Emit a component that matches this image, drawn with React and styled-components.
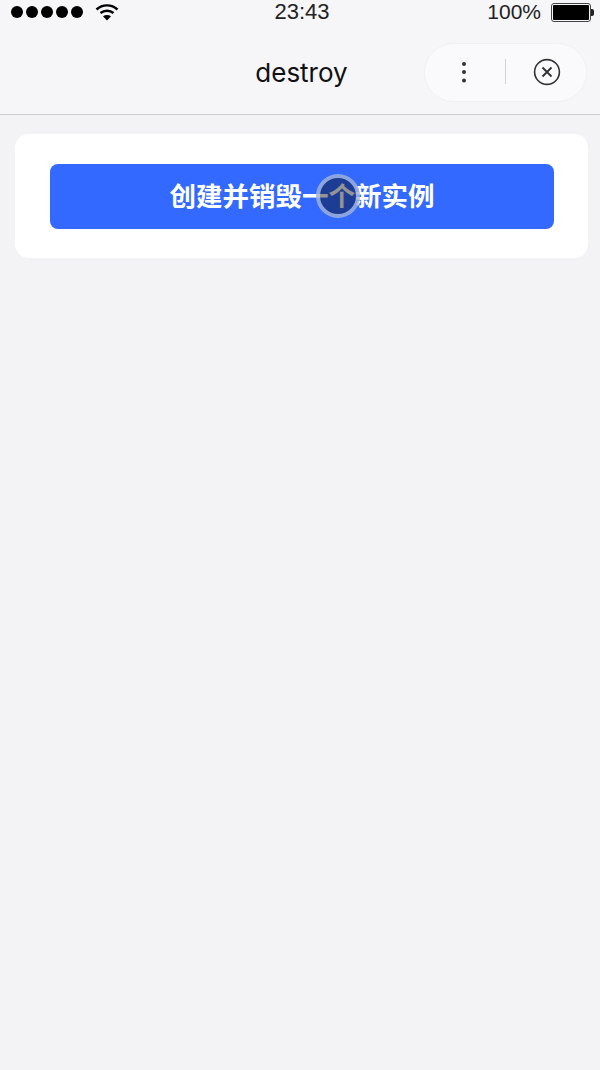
import React from "react";
import styled, { createGlobalStyle } from "styled-components";

const GlobalStyle = createGlobalStyle`
  html, body {
    margin: 0;
    padding: 0;
    background: #f3f2f5;
  }
  * {
    box-sizing: border-box;
  }
`;

const Page = styled.div`
  width: 600px;
  height: 1070px;
  overflow: hidden;
  display: flex;
  flex-direction: column;
  background: #f3f2f5;
  font-family: "Inter", "Liberation Sans", "Noto Sans CJK SC", sans-serif;
  color: #111;
`;

const Header = styled.header`
  height: 115px;
  flex: none;
  background: #f6f5f8;
  border-bottom: 1px solid #cfcfd1;
  display: flex;
  flex-direction: column;
`;

const StatusBar = styled.div`
  height: 24px;
  padding: 0 9px 0 11px;
  display: grid;
  grid-template-columns: 1fr auto 1fr;
  align-items: center;
`;

const StatusLeft = styled.div`
  display: flex;
  align-items: center;
  gap: 12px;
`;

const Dots = styled.div`
  display: flex;
  gap: 3px;
`;

const Dot = styled.span`
  width: 12px;
  height: 12px;
  border-radius: 50%;
  background: #000;
`;

const Clock = styled.div`
  font-family: "Liberation Sans", sans-serif;
  font-size: 22px;
  line-height: 24px;
  color: #222;
  margin-left: 2px;
`;

const StatusRight = styled.div`
  display: flex;
  justify-content: flex-end;
  align-items: center;
  gap: 10px;
  font-family: "Liberation Sans", sans-serif;
  font-size: 21px;
  line-height: 24px;
  color: #222;
`;

const Battery = styled.div`
  position: relative;
  width: 40px;
  height: 19px;
  padding: 1px;
  border: 1px solid #444;
  border-radius: 3px;

  &::before {
    content: "";
    display: block;
    height: 100%;
    background: #000;
    border-radius: 1px;
  }

  &::after {
    content: "";
    position: absolute;
    right: -4px;
    top: 5px;
    width: 3px;
    height: 7px;
    background: #222;
    border-radius: 0 2px 2px 0;
  }
`;

const NavBar = styled.div`
  flex: 1;
  position: relative;
  display: flex;
  align-items: center;
  justify-content: center;
  padding: 8px 0 0 3px;
`;

const Title = styled.h1`
  margin: 0;
  font-size: 26px;
  font-weight: 400;
  line-height: 32px;
  color: #111;
`;

const Capsule = styled.div`
  position: absolute;
  top: 19px;
  right: 13px;
  width: 163px;
  height: 59px;
  border-radius: 30px;
  background: #faf9fc;
  border: 1px solid #f1f0f3;
  display: grid;
  grid-template-columns: 1fr 1px 1fr;
  align-items: center;
  justify-items: center;
  padding-bottom: 2px;
`;

const Divider = styled.span`
  width: 1px;
  height: 25px;
  background: #d2d2d4;
`;

const IconButton = styled.span`
  display: flex;
  align-items: center;
  justify-content: center;
`;

const MoreButton = styled(IconButton)`
  margin-right: 2px;
`;

const CloseButton = styled(IconButton)`
  margin-left: 2px;
`;

const Content = styled.main`
  padding: 19px 12px 0 15px;
`;

const Card = styled.section`
  height: 124px;
  padding: 30px 34px 0 35px;
  background: #fff;
  border-radius: 14px;
`;

const CreateButton = styled.button`
  position: relative;
  display: block;
  width: 100%;
  height: 65px;
  padding: 0 0 3px;
  border: none;
  border-radius: 8px;
  background: #3369ff;
  color: #fff;
  font-family: "Noto Sans CJK SC", sans-serif;
  font-size: 26.5px;
  font-weight: 700;
  line-height: 40px;
  text-align: center;
`;

const TouchMarker = styled.span`
  position: absolute;
  left: 266px;
  top: 10px;
  width: 44px;
  height: 44px;
  border-radius: 50%;
  background: rgba(0, 0, 0, 0.42);
  border: 4px solid rgba(190, 210, 255, 0.7);
`;

const StatusWifi = () => (
  <svg width="24" height="18" viewBox="0 0 24 18" fill="none">
    <path d="M1.5 6.5C7.5 1 16.5 1 22.5 6.5" stroke="#000" strokeWidth="2.4" />
    <path d="M5.5 10C9.2 7 14.8 7 18.5 10" stroke="#000" strokeWidth="2.4" />
    <path d="M12 17.5L8 13.2C10.4 11.6 13.6 11.6 16 13.2Z" fill="#000" />
  </svg>
);

const MoreIcon = () => (
  <svg width="8" height="22" viewBox="0 0 8 22" fill="#333">
    <circle cx="4" cy="3" r="2" />
    <circle cx="4" cy="11" r="2" />
    <circle cx="4" cy="19.5" r="2" />
  </svg>
);

const CloseIcon = () => (
  <svg width="28" height="28" viewBox="0 0 28 28" fill="none" stroke="#333" strokeWidth="1.6">
    <circle cx="14" cy="14" r="12.4" />
    <path d="M9.5 9.5L18.5 18.5M18.5 9.5L9.5 18.5" strokeWidth="1.9" />
  </svg>
);

const App = () => {
  return (
    <Page>
      <GlobalStyle />
      <Header>
        <StatusBar>
          <StatusLeft>
            <Dots>
              <Dot />
              <Dot />
              <Dot />
              <Dot />
              <Dot />
            </Dots>
            <StatusWifi />
          </StatusLeft>
          <Clock>23:43</Clock>
          <StatusRight>
            100%
            <Battery />
          </StatusRight>
        </StatusBar>
        <NavBar>
          <Title>destroy</Title>
          <Capsule>
            <MoreButton>
              <MoreIcon />
            </MoreButton>
            <Divider />
            <CloseButton>
              <CloseIcon />
            </CloseButton>
          </Capsule>
        </NavBar>
      </Header>
      <Content>
        <Card>
          <CreateButton>
            创建并销毁一个新实例
            <TouchMarker />
          </CreateButton>
        </Card>
      </Content>
    </Page>
  );
};

export default App;
